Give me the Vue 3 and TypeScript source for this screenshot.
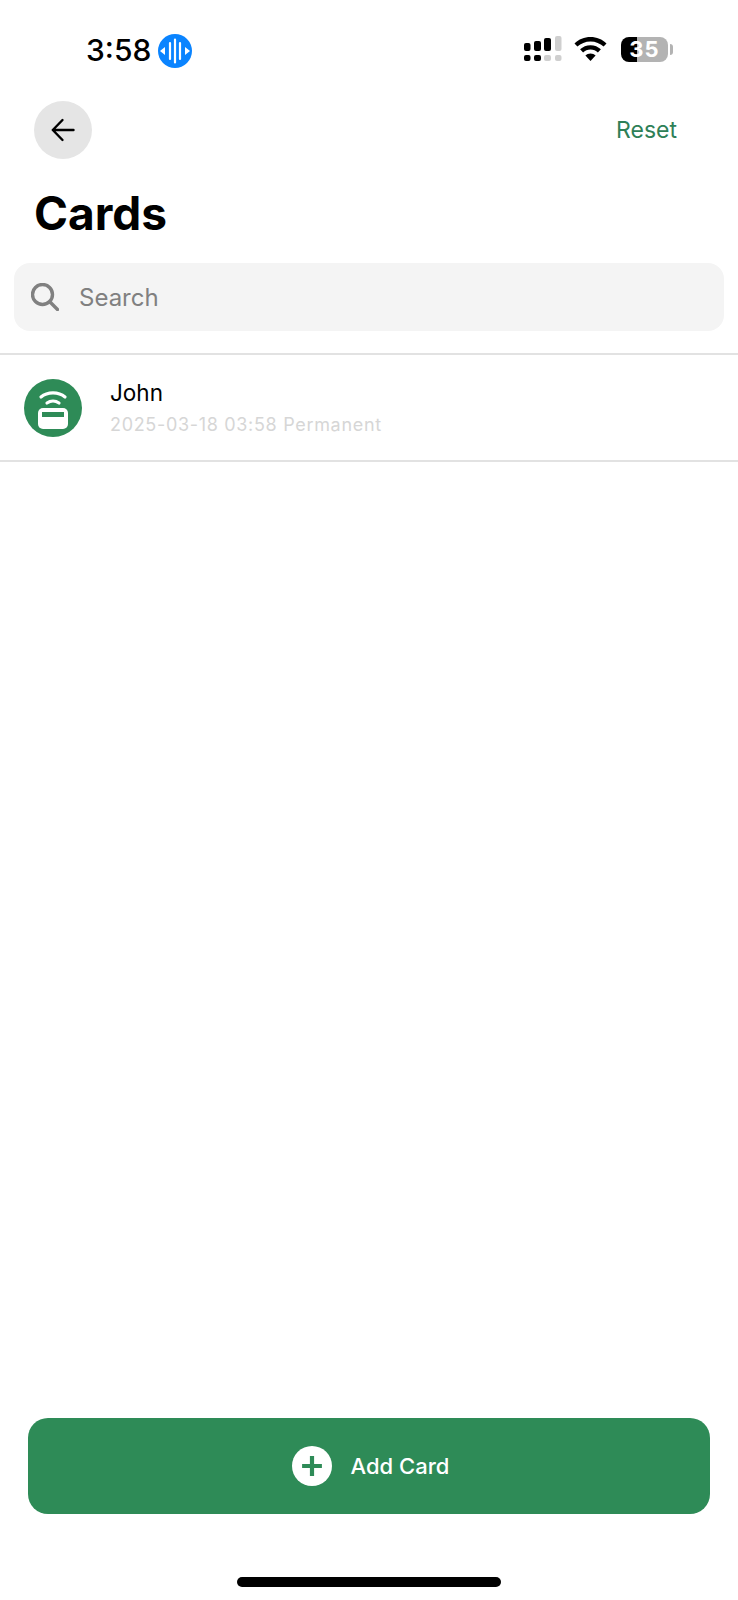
<script setup lang="ts">
interface CardEntry {
  name: string
  issued: string
  validity: string
}

const cards: CardEntry[] = [
  { name: 'John', issued: '2025-03-18 03:58', validity: 'Permanent' },
]
</script>

<template>
  <div class="page">
    <header class="status">
      <div class="clock">
        <span class="time">3:58</span>
        <svg class="voice" viewBox="0 0 34 34" width="34" height="34">
          <circle cx="17" cy="17" r="17" fill="#0a84ff" />
          <path d="M2 17 7 13v8z" fill="#fff" />
          <path d="M32 17 27 13v8z" fill="#fff" />
          <g stroke="#fff" stroke-width="2.200" stroke-linecap="round">
            <path d="M12 9v16M17 5.500v23M22 9v16" />
          </g>
        </svg>
      </div>
      <div class="indicators">
        <svg viewBox="0 0 38 26" width="38" height="26">
          <rect x="0" y="7" width="6.500" height="8" rx="2" />
          <rect x="10" y="5" width="7" height="10" rx="2" />
          <rect x="20" y="2" width="7" height="13" rx="2" />
          <rect x="31" y="0" width="6.500" height="15" rx="2" fill="#cfcfcf" />
          <rect x="0" y="19" width="6.500" height="6" rx="2" />
          <rect x="10" y="19" width="7" height="6" rx="2" />
          <rect x="20" y="19" width="7" height="6" rx="2" fill="#cfcfcf" />
          <rect x="31" y="19" width="6.500" height="6" rx="2" fill="#cfcfcf" />
        </svg>
        <svg class="wifi" viewBox="0 0 33 24" width="33" height="24">
          <path d="M16.500 0C10.300 0 4.700 2.400.5 6.400l2.900 3.200c3.400-3.200 8-5.200 13.100-5.200s9.700 2 13.100 5.200l2.900-3.200C28.300 2.400 22.700 0 16.500 0z" />
          <path d="M16.500 8.200c-4 0-7.700 1.600-10.400 4.100l3 3.200c1.900-1.800 4.500-2.900 7.400-2.900s5.500 1.100 7.400 2.900l3-3.200c-2.700-2.500-6.400-4.100-10.400-4.100z" />
          <path d="M16.500 16.400c-2 0-3.800.8-5.100 2l5.100 5.600 5.100-5.600c-1.300-1.200-3.100-2-5.100-2z" />
        </svg>
        <div class="battery">
          <span class="level">35</span>
        </div>
        <span class="nub"></span>
      </div>
    </header>

    <nav class="nav">
      <button class="back" type="button" aria-label="Back">
        <svg viewBox="0 0 24 24" width="24" height="24" fill="none" stroke="#000" stroke-width="2.400" stroke-linecap="round" stroke-linejoin="round">
          <path d="M22.500 12H1.800M11.500 2 1.800 12l9.700 10" />
        </svg>
      </button>
      <button class="reset" type="button">Reset</button>
    </nav>

    <h1 class="title">Cards</h1>

    <div class="search">
      <svg viewBox="0 0 28 28" width="28" height="28" fill="none" stroke="#808080" stroke-width="3.400" stroke-linecap="round">
        <circle cx="11.500" cy="11.500" r="10" />
        <path d="M18.800 18.800 26.500 26.500" />
      </svg>
      <span class="placeholder">Search</span>
    </div>

    <ul class="list">
      <li v-for="card in cards" :key="card.name" class="row">
        <svg class="avatar" viewBox="0 0 58 58" width="58" height="58">
          <circle cx="29" cy="29" r="29" fill="#2e8b57" />
          <g fill="none" stroke="#fff" stroke-width="3.200" stroke-linecap="round">
            <path d="M17 18c6.500-5.500 17.500-5.500 24 0" />
            <path d="M23 24c3.500-2.400 8.500-2.400 12 0" />
          </g>
          <rect x="14" y="29" width="30" height="21" rx="5" fill="#fff" />
          <rect x="18" y="33" width="22" height="5" fill="#2e8b57" />
        </svg>
        <div class="info">
          <span class="name">{{ card.name }}</span>
          <span class="meta">{{ card.issued }} {{ card.validity }}</span>
        </div>
      </li>
    </ul>

    <div class="spacer"></div>

    <button class="add" type="button">
      <span class="plus">
        <svg viewBox="0 0 20 20" width="22" height="22" stroke="#2e8b57" stroke-width="3.800">
          <path d="M10 1v18M1 10h18" />
        </svg>
      </span>
      <span>Add Card</span>
    </button>

    <div class="home-area">
      <span class="home-bar"></span>
    </div>
  </div>
</template>

<style>
html,
body {
  background: #fff;
}
</style>

<style scoped>
.page {
  display: flex;
  flex-direction: column;
  height: 1600px;
  background: #fff;
  color: #000;
  font-family: Inter, "Liberation Sans", sans-serif;
}

button {
  padding: 0;
  border: 0;
  background: none;
  font-family: inherit;
}

.status {
  display: flex;
  align-items: flex-start;
  justify-content: space-between;
  height: 101px;
  padding: 33px 65px 0 86px;
  box-sizing: border-box;
}

.clock {
  display: flex;
  align-items: center;
  gap: 7px;
}

.time {
  font-size: 30px;
  line-height: 35px;
  font-weight: 500;
}

.indicators {
  display: flex;
  align-items: center;
  margin-top: 3px;
}

.wifi {
  margin-left: 12px;
}

.battery {
  display: flex;
  align-items: center;
  justify-content: center;
  width: 47px;
  height: 25px;
  margin-left: 14px;
  border-radius: 8px;
  background: linear-gradient(90deg, #000 35%, #b3b3b3 35%);
}

.level {
  color: #fff;
  font-size: 22px;
  font-weight: 700;
  letter-spacing: 1px;
}

.nub {
  width: 3px;
  height: 11px;
  margin-left: 2px;
  border-radius: 0 3px 3px 0;
  background: #b3b3b3;
}

.nav {
  display: flex;
  align-items: center;
  justify-content: space-between;
  padding: 0 61px 0 34px;
}

.back {
  display: flex;
  align-items: center;
  justify-content: center;
  width: 58px;
  height: 58px;
  border-radius: 50%;
  background: #e5e5e5;
}

.reset {
  color: #2e8057;
  font-size: 23px;
}

.title {
  margin: 26px 0 22px 34px;
  font-size: 46px;
  line-height: 56px;
  font-weight: 700;
}

.search {
  display: flex;
  align-items: center;
  gap: 20px;
  height: 68px;
  margin: 0 14px;
  padding-left: 17px;
  border-radius: 16px;
  background: #f4f4f4;
}

.placeholder {
  color: #808080;
  font-size: 24px;
}

.list {
  margin: 22px 0 0;
  padding: 0;
  list-style: none;
  border-top: 2px solid #e2e2e2;
  border-bottom: 2px solid #e2e2e2;
}

.row {
  display: flex;
  align-items: center;
  gap: 28px;
  height: 105px;
  padding-left: 24px;
}

.info {
  display: flex;
  flex-direction: column;
  gap: 7px;
}

.name {
  font-size: 22.500px;
  line-height: 28px;
  font-weight: 400;
}

.meta {
  color: #d6d6d6;
  font-size: 18px;
  line-height: 22px;
  letter-spacing: 0.68px;
}

.spacer {
  flex: 1;
}

.add {
  display: flex;
  align-items: center;
  justify-content: center;
  gap: 19px;
  height: 96px;
  margin: 0 28px;
  padding-left: 3px;
  border-radius: 20px;
  background: #2e8b57;
  color: #fff;
  font-size: 22px;
  font-weight: 500;
}

.plus {
  display: flex;
  align-items: center;
  justify-content: center;
  width: 40px;
  height: 40px;
  border-radius: 50%;
  background: #fff;
}

.home-area {
  display: flex;
  justify-content: center;
  height: 86px;
  padding-top: 63px;
  box-sizing: border-box;
}

.home-bar {
  width: 264px;
  height: 10px;
  border-radius: 5px;
  background: #000;
}
</style>
